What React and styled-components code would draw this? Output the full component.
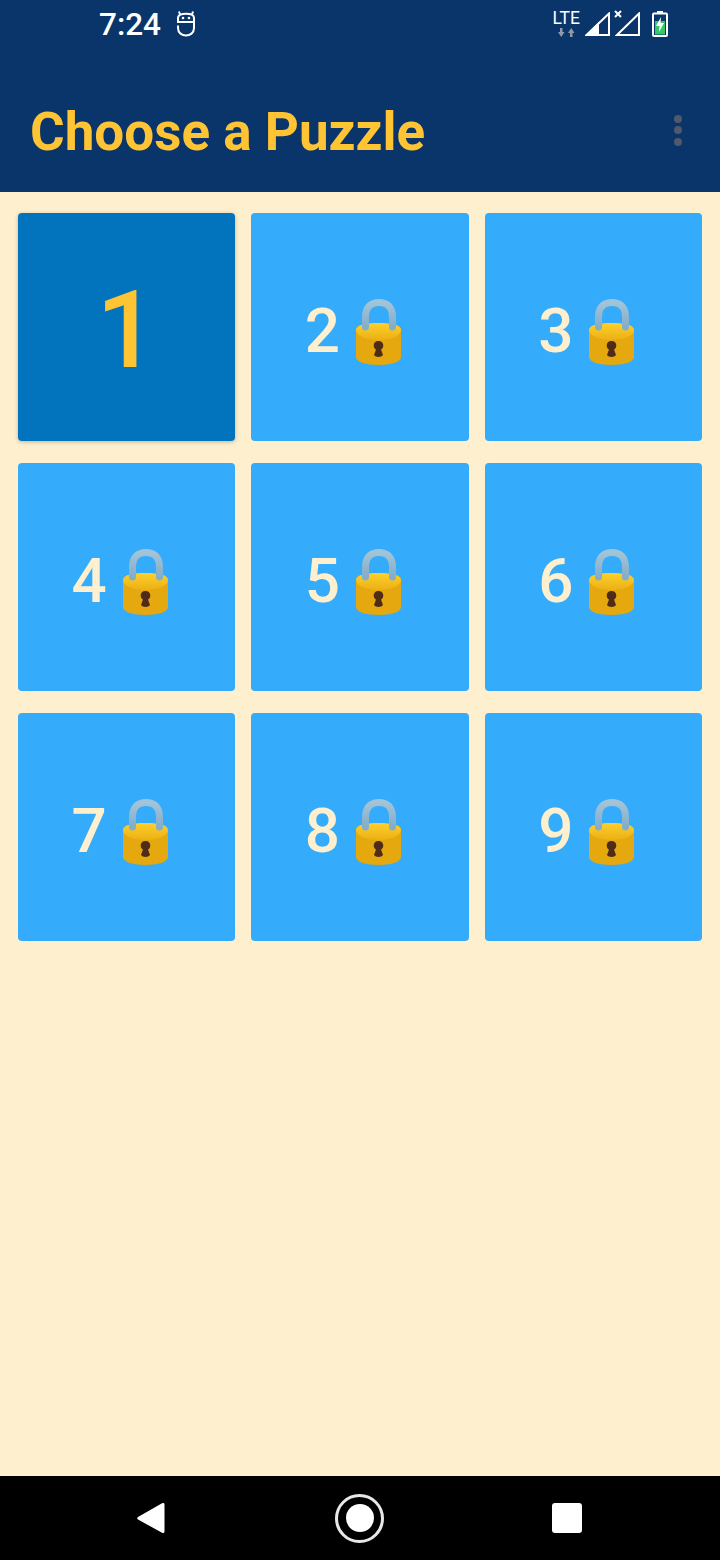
import styled, { createGlobalStyle } from 'styled-components'

const PUZZLES = [1, 2, 3, 4, 5, 6, 7, 8, 9]

const LockIcon = () => (
  <LockSvg viewBox="0 0 46 66">
    <defs>
      <linearGradient id="lockTop" x1="0" y1="0" x2="0" y2="1">
        <stop offset="0" stopColor="#fdd02c" />
        <stop offset="1" stopColor="#ebb014" />
      </linearGradient>
      <linearGradient id="shackle" x1="0" y1="0" x2="0" y2="1">
        <stop offset="0" stopColor="#a3c4d8" />
        <stop offset="1" stopColor="#84adc8" />
      </linearGradient>
    </defs>
    <path d="M0 31 C0 26 10 24 22.500 24 C35 24 45 26 45 31 V58 C45 63 35 66 22.500 66 C10 66 0 63 0 58 Z" fill="#e5a80f" />
    <path d="M0 31 C0 26 10 24 22.500 24 C35 24 45 26 45 31 C45 37 35 41 22.500 41 C10 41 0 37 0 31 Z" fill="url(#lockTop)" />
    <path d="M9.500 28 V18 C9.500 8 15 3.500 23 3.500 C31 3.500 36.500 8 36.500 18 V28" fill="none" stroke="url(#shackle)" strokeWidth="7" strokeLinecap="round" />
    <path d="M22.500 42 C19.500 42 17.700 44 17.700 46.500 C17.700 48.500 18.700 49.800 20 50.600 L18 56 C19.500 58.600 25.500 58.600 27 56 L25 50.600 C26.300 49.800 27.300 48.500 27.300 46.500 C27.300 44 25.500 42 22.500 42 Z" fill="#4e2c17" />
  </LockSvg>
)

const BotIcon = () => (
  <svg width="20" height="26" viewBox="0 0 20 26" fill="none" stroke="#fff" strokeWidth="2">
    <path d="M3 0.500 L4 3.500 M17 0.500 L16 3.500" />
    <path d="M2 11 V7 C2 3.500 6 2.800 10 2.800 C14 2.800 18 3.500 18 7 V11 Z" />
    <path d="M18 11 V17 C18 22 14 24.500 10 24.500 C6 24.500 2 22 2 17 V14.500" />
    <circle cx="7" cy="7" r="1.300" fill="#fff" stroke="none" />
    <circle cx="13" cy="7" r="1.300" fill="#fff" stroke="none" />
  </svg>
)

const SignalFull = () => (
  <svg width="25" height="24" viewBox="0 0 25 24">
    <path d="M1.500 23 L24 1.500 V23 Z" fill="none" stroke="#fff" strokeWidth="2" />
    <path d="M0 24 L14 10 V24 Z" fill="#fff" />
  </svg>
)

const SignalEmpty = () => (
  <NoDataSignal>
    <svg width="10" height="10" viewBox="0 0 10 10" stroke="#fff" strokeWidth="2">
      <path d="M2 2 L8 8 M8 2 L2 8" />
    </svg>
    <svg width="25" height="24" viewBox="0 0 25 24">
      <path d="M2 23 L24 1.500 V23 Z" fill="none" stroke="#fff" strokeWidth="2" />
    </svg>
  </NoDataSignal>
)

const BatteryIcon = () => (
  <svg width="16" height="26" viewBox="0 0 16 26">
    <path d="M5 0 H11 V2 H5 Z" fill="#fff" />
    <rect x="1" y="2.500" width="14" height="22.500" rx="1" fill="none" stroke="#fff" strokeWidth="2" />
    <rect x="3" y="10" width="10" height="13.500" fill="#35c76a" />
    <path d="M9 6 L4 15 H7.500 L7 21 L12 12 H8.500 Z" fill="#fff" />
  </svg>
)

const App = () => {
  return (
    <Page>
      <GlobalStyle />
      <Header>
        <StatusBar>
          <Time>7:24</Time>
          <BotIcon />
          <StatusIcons>
            <Lte>
              <LteLabel>LTE</LteLabel>
              <svg width="17" height="9" viewBox="0 0 17 9" fill="#8f9aa9">
                <path d="M2 4 V0 H4.500 V4 H6.500 L3.250 9 L0 4 Z" />
                <path d="M12 5 V9 H14.500 V5 H16.500 L13.250 0 L10 5 Z" />
              </svg>
            </Lte>
            <SignalFull />
            <SignalEmpty />
            <BatterySlot>
              <BatteryIcon />
            </BatterySlot>
          </StatusIcons>
        </StatusBar>
        <Toolbar>
          <Title>Choose a Puzzle</Title>
          <Overflow>
            <Dot />
            <Dot />
            <Dot />
          </Overflow>
        </Toolbar>
      </Header>

      <Main>
        <Grid>
          {PUZZLES.map((n) => (
            <PuzzleButton key={n} $unlocked={n === 1}>
              {n}
              {n !== 1 && <LockIcon />}
            </PuzzleButton>
          ))}
        </Grid>
      </Main>

      <NavBar>
        <BackIcon viewBox="0 0 28 32">
          <path d="M26 1 C27 1 27.500 1.500 27.500 2.500 V29.500 C27.500 30.500 26.500 31.500 25.500 31 L1 17.500 C0 17 0 15.500 1 15 L25 1.300 Z" />
        </BackIcon>
        <HomeRing>
          <HomeDot />
        </HomeRing>
        <RecentSquare />
      </NavBar>
    </Page>
  )
}

const GlobalStyle = createGlobalStyle`
  body {
    margin: 0;
    font-family: Roboto, "Liberation Sans", sans-serif;
  }
`

const Page = styled.div`
  width: 720px;
  height: 1560px;
  display: flex;
  flex-direction: column;
  background-color: #fef0cf;
`

const Header = styled.header`
  height: 192px;
  flex-shrink: 0;
  background-color: #0a356b;
`

const StatusBar = styled.div`
  height: 48px;
  display: flex;
  align-items: center;
  gap: 15px;
  padding: 0 52px 0 99px;
`

const Time = styled.span`
  font-size: 31.500px;
  font-weight: 500;
  color: #fff;
`

const StatusIcons = styled.div`
  margin-left: auto;
  display: flex;
  align-items: center;
  gap: 4px;
`

const Lte = styled.div`
  display: flex;
  flex-direction: column;
  align-items: center;
  gap: 2px;
  margin-right: 1px;
`

const LteLabel = styled.span`
  font-size: 17.500px;
  line-height: 15px;
  color: #fff;
`

const NoDataSignal = styled.div`
  display: flex;
  align-items: flex-start;
  margin-left: -1px;

  svg:first-child {
    margin-right: -8px;
    margin-top: -3px;
  }
`

const BatterySlot = styled.div`
  margin-left: 8px;
  display: flex;
`

const Toolbar = styled.div`
  height: 144px;
  display: flex;
  align-items: center;
  justify-content: space-between;
  padding: 24px 38px 0 30px;
  box-sizing: border-box;
`

const Title = styled.h1`
  margin: 0;
  font-size: 53px;
  font-weight: 700;
  color: #ffc433;
`

const Overflow = styled.div`
  display: flex;
  flex-direction: column;
  gap: 3.500px;
  margin-bottom: 4px;
`

const Dot = styled.span`
  width: 8px;
  height: 8px;
  border-radius: 50%;
  background-color: #50596a;
`

const Main = styled.main`
  flex: 1;
  padding: 21px 18px 0;
`

const Grid = styled.div`
  display: grid;
  grid-template-columns: repeat(3, 1fr);
  grid-auto-rows: 228px;
  column-gap: 16px;
  row-gap: 22px;
`

const PuzzleButton = styled.div`
  display: flex;
  align-items: center;
  justify-content: center;
  padding-top: 6px;
  box-sizing: border-box;
  border-radius: 4px;
  background-color: ${({ $unlocked }) => ($unlocked ? '#0274be' : '#34abfb')};
  color: ${({ $unlocked }) => ($unlocked ? '#ffc433' : '#fef0cf')};
  font-size: ${({ $unlocked }) => ($unlocked ? '107px' : '62px')};
  font-weight: 500;
  box-shadow: ${({ $unlocked }) => ($unlocked ? '0 1px 4px rgba(0, 0, 0, 0.25)' : 'none')};
`

const LockSvg = styled.svg`
  width: 46px;
  height: 66px;
  margin: 3px 13px 0 16px;
`

const NavBar = styled.nav`
  height: 84px;
  flex-shrink: 0;
  display: flex;
  align-items: center;
  justify-content: space-between;
  padding: 0 138px 0 137px;
  background-color: #000;
`

const BackIcon = styled.svg`
  width: 28px;
  height: 32px;
  margin-right: 2px;
  fill: #fff;
`

const HomeRing = styled.div`
  width: 49px;
  height: 49px;
  box-sizing: border-box;
  border: 3px solid #e8e8e8;
  border-radius: 50%;
  display: flex;
  align-items: center;
  justify-content: center;
`

const HomeDot = styled.span`
  width: 28px;
  height: 28px;
  border-radius: 50%;
  background-color: #fff;
`

const RecentSquare = styled.span`
  width: 30px;
  height: 30px;
  border-radius: 3px;
  background-color: #fff;
`

export default App
